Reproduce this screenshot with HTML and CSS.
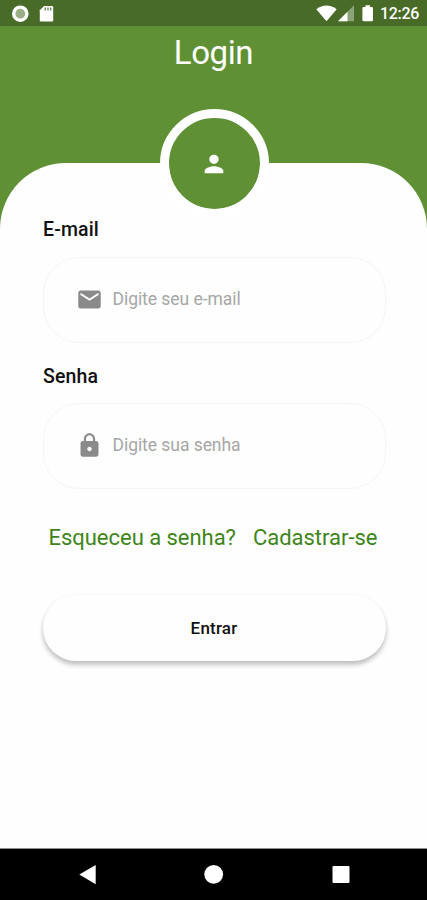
FILE: index.html
```html
<!DOCTYPE html>
<html lang="pt-BR">
<head>
<meta charset="utf-8">
<title>Login</title>
<link rel="stylesheet" href="styles.css">
</head>
<body>
<div class="screen">
  <header class="status">
    <svg class="status-left" width="60" height="26" viewBox="0 0 60 26">
      <circle cx="20.300" cy="13.700" r="6.600" fill="#9aaf88" stroke="#fff" stroke-width="3.400"/>
      <path d="M44 6h8q1.200 0 1.200 1.200v13q0 1.200-1.200 1.200h-11q-1.200 0-1.200-1.200v-10z" fill="#fff"/>
      <path d="M45.200 7.500v3M48 7.500v3M50.700 7.500v3" stroke="#6b8655" stroke-width="1.400"/>
    </svg>
    <svg class="status-right" width="60" height="26" viewBox="316 0 60 26">
      <path d="M316.300 9.200Q326.500 1.700 336.700 9.200L326.500 21.300z" fill="#fff"/>
      <path d="M338 21.300L354 5.300V21.300z" fill="#8ba376"/>
      <path d="M338 21.300L347.500 11.800V21.300z" fill="#fff"/>
      <path d="M365.500 5.300h4.500v1.700h1.700q1.300 0 1.300 1.300v11.700q0 1.300-1.300 1.300h-8q-1.300 0-1.300-1.300v-11.700q0-1.300 1.300-1.300h1.800z" fill="#fff"/>
    </svg>
    <span class="clock">12:26</span>
  </header>
  <div class="banner"><h1 class="title">Login</h1></div>
  <main class="sheet">
    <div class="avatar">
      <svg width="28" height="28" viewBox="0 0 24 24" fill="#fff"><path d="M12 12c2.210 0 4-1.790 4-4s-1.790-4-4-4-4 1.790-4 4 1.790 4 4 4zm0 2c-2.670 0-8 1.340-8 4v2h16v-2c0-2.660-5.330-4-8-4z"/></svg>
    </div>
    <form class="form">
      <label class="label label-email">E-mail</label>
      <div class="field">
        <svg class="icon" viewBox="0 0 24 24"><path d="M20 4H4c-1.100 0-1.990.9-1.990 2L2 18c0 1.100.9 2 2 2h16c1.100 0 2-.9 2-2V6c0-1.100-.9-2-2-2zm0 4l-8 5-8-5V6l8 5 8-5v2z"/></svg>
        <span class="hint">Digite seu e-mail</span>
      </div>
      <label class="label label-senha">Senha</label>
      <div class="field">
        <svg class="icon" viewBox="0 0 24 24"><path d="M18 8h-1V6c0-2.760-2.240-5-5-5S7 3.240 7 6v2H6c-1.100 0-2 .9-2 2v10c0 1.100.9 2 2 2h12c1.100 0 2-.9 2-2V10c0-1.100-.9-2-2-2zm-6 9c-1.100 0-2-.9-2-2s.9-2 2-2 2 .9 2 2-.9 2-2 2zm3.100-9H8.900V6c0-1.710 1.390-3.100 3.100-3.100 1.710 0 3.100 1.390 3.100 3.100v2z"/></svg>
        <span class="hint">Digite sua senha</span>
      </div>
      <div class="links">
        <span class="link">Esqueceu a senha?</span>
        <span class="link">Cadastrar-se</span>
      </div>
      <button class="submit" type="button">Entrar</button>
    </form>
  </main>
  <nav class="nav">
    <svg width="427" height="51" viewBox="0 849 427 51" fill="#fff">
      <path d="M79.300 874.500L95.700 865V884.200z"/>
      <circle cx="213.700" cy="874.300" r="9.400"/>
      <rect x="332.500" y="866" width="17" height="17" rx="1"/>
    </svg>
  </nav>
</div>
</body>
</html>
```
FILE: styles.css
```css
* { box-sizing: border-box; }
body { margin: 0; font-family: Roboto, sans-serif; background: #fff; }
.screen { width: 427px; height: 900px; display: flex; flex-direction: column; background: #5f9134; overflow: hidden; }
.status { height: 26px; flex: none; display: flex; background: #496b28; color: #fff; }
.status svg, .nav svg { display: block; }
.status-right { margin-left: 256px; }
.clock { margin-left: 4px; font-size: 16px; font-weight: 500; line-height: 28px; letter-spacing: -0.300px; white-space: nowrap; }
.banner { height: 137px; flex: none; text-align: center; }
.title { margin: 0; padding-top: 7px; color: #fff; font-size: 33px; font-weight: 400; line-height: 40px; letter-spacing: -0.400px; }
.sheet { flex: 1; background: #fefefe; border-radius: 66px 66px 0 0; display: flex; flex-direction: column; align-items: center; }
.avatar { width: 109px; height: 109px; flex: none; margin: -54px 0 0 1px; border: 9px solid #fff; border-radius: 50%; background: #5f9134; background-clip: padding-box; display: flex; align-items: center; justify-content: center; }
.form { width: 343px; margin-left: 1px; display: flex; flex-direction: column; }
.label { display: block; height: 24px; padding-left: 0.500px; font-size: 19.500px; font-weight: 500; line-height: 24px; letter-spacing: 0.150px; color: #111; }
.label-email { margin-bottom: 15px; }
.label-senha { margin: 22px 0 14px; }
.field { height: 86px; border: 1px solid #f5f5f5; border-radius: 36px; display: flex; align-items: center; padding-left: 32px; }
.icon { width: 27px; height: 27px; margin-top: -2px; fill: #8a8a8a; }
.hint { margin-left: 10px; margin-top: -2px; font-size: 17.500px; line-height: 24px; letter-spacing: -0.050px; color: #a6a6a6; white-space: nowrap; }
.links { display: flex; height: 30px; margin-top: 34px; padding-left: 6px; gap: 17px; }
.link { font-size: 22px; line-height: 30px; letter-spacing: -0.030px; color: #3e8518; white-space: nowrap; }
.submit { height: 66px; margin: 42px 0 0; padding: 0; border: 0; border-radius: 33px; background: #fefefe; box-shadow: 0 4px 5px rgba(0,0,0,.2), 0 2px 5px rgba(0,0,0,.08); font: 500 17px/66px Roboto, sans-serif; letter-spacing: 0.200px; color: #111; }
.nav { height: 52px; flex: none; background: #000; border-top: 1px solid #8c8c8c; }
```
